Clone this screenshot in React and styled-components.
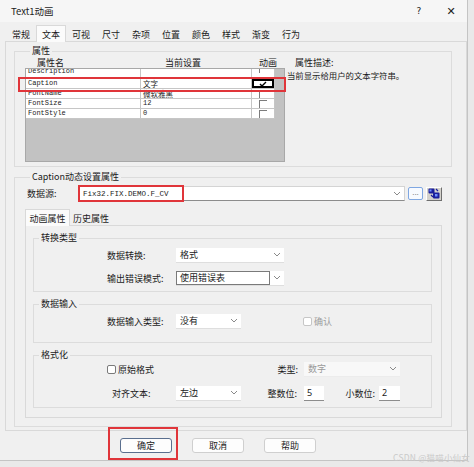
import React from "react";
import styled, { createGlobalStyle } from "styled-components";

const GlobalStyle = createGlobalStyle`
  html, body {
    margin: 0;
    padding: 0;
    background: #e9e9e9;
  }
  body {
    font-family: "Noto Sans CJK SC", "Noto Sans", sans-serif;
    font-size: 9px;
    color: #1b1b1b;
  }
  * {
    box-sizing: border-box;
  }
`;

const Page = styled.div`
  position: relative;
  width: 474px;
  height: 467px;
  overflow: hidden;
`;

const Window = styled.div`
  width: 468px;
  height: 461px;
  background: #f0f0f0;
  border-right: 1px solid #c4c4c4;
  border-bottom: 1px solid #c4c4c4;
  display: flex;
  flex-direction: column;
`;

const TitleBar = styled.div`
  height: 22px;
  flex: none;
  display: flex;
  align-items: center;
  padding-left: 11px;
  background: #f6f6f6;
  font-size: 9.5px;
`;

const TitleText = styled.span`
  flex: 1;
`;

const TitleButton = styled.span`
  width: 32px;
  text-align: center;
  font-family: "DejaVu Sans", sans-serif;
  font-size: ${(p) => p.$size || 10}px;
  color: #222;
`;

const TabStrip = styled.div`
  position: relative;
  z-index: 1;
  height: ${(p) => p.$h}px;
  flex: none;
  display: flex;
  align-items: flex-end;
  padding-left: ${(p) => p.$indent || 0}px;
`;

const Tab = styled.div`
  width: ${(p) => p.$w}px;
  height: ${(p) => (p.$active ? p.$h : p.$h - 2)}px;
  margin-bottom: ${(p) => (p.$active ? -1 : 0)}px;
  display: flex;
  align-items: center;
  justify-content: center;
  background: ${(p) => (p.$active ? "#fbfbfb" : "transparent")};
  border: 1px solid ${(p) => (p.$active ? "#d9d9d9" : "transparent")};
  border-bottom: none;
`;

const TabPanel = styled.div`
  margin-left: 5px;
  width: 462px;
  border: 1px solid #d9d9d9;
  padding: 4px 14px 3px 8px;
`;

const Group = styled.fieldset`
  margin: ${(p) => p.$mt || 0}px 0 0 0;
  padding: ${(p) => p.$pad};
  border: 1px solid #dcdcdc;
  min-width: 0;
`;

const Legend = styled.legend`
  padding: 0 2px;
  margin-left: 5px;
  font-size: 9px;
  line-height: 10px;
`;

/* property grid */

const PropArea = styled.div`
  display: flex;
`;

const GridColumn = styled.div`
  width: 260px;
  flex: none;
`;

const HeaderRow = styled.div`
  display: flex;
  height: 10px;
  line-height: 10px;
  font-size: 9px;
`;

const HeaderCell = styled.span`
  width: ${(p) => p.$w}px;
  padding-left: ${(p) => p.$pl}px;
  flex: none;
  white-space: nowrap;
`;

const GridBox = styled.div`
  position: relative;
  height: 94px;
  border: 1px solid #a8a8a8;
  background: #c2c2c2;
`;

const GridRow = styled.div`
  display: grid;
  grid-template-columns: 115px 111px 23px 9px;
  height: 10px;
  overflow: hidden;
`;

const GridCell = styled.div`
  background: #fff;
  border-right: 1px solid #c6c6c6;
  border-bottom: 1px solid #c6c6c6;
  padding-left: 2px;
  font-family: ${(p) =>
    p.$cjk
      ? '"Noto Sans CJK SC", sans-serif'
      : '"Liberation Mono", "DejaVu Sans Mono", monospace'};
  font-size: ${(p) => (p.$cjk ? 7.5 : 7)}px;
  line-height: ${(p) => (p.$clip ? 5 : 9)}px;
  white-space: nowrap;
  overflow: hidden;
`;

const CheckCell = styled.div`
  background: #fff;
  border-right: 1px solid #c6c6c6;
  border-bottom: 1px solid #c6c6c6;
  display: flex;
  align-items: ${(p) => (p.$clip ? "flex-start" : "center")};
  justify-content: center;
`;

const Gutter = styled.div`
  background: #c2c2c2;
`;

const ClassicCheck = styled.span`
  width: 8px;
  height: ${(p) => (p.$clip ? 4 : 8)}px;
  border-top: ${(p) => (p.$clip ? "none" : "1px solid #7c7c7c")};
  border-left: 1px solid #7c7c7c;
`;

const FocusBox = styled.span`
  width: 22px;
  height: 9px;
  border: 2px solid #000;
  display: flex;
  align-items: center;
  justify-content: center;
`;

const Highlight = styled.span`
  position: absolute;
  left: ${(p) => p.$x}px;
  top: ${(p) => p.$y}px;
  width: ${(p) => p.$w}px;
  height: ${(p) => p.$h}px;
  border: 2px solid #e0353a;
  pointer-events: none;
`;

const DescColumn = styled.div`
  flex: 1;
  padding-left: 2px;
`;

const DescTitle = styled.div`
  padding-left: 8px;
  font-size: 9px;
  line-height: 10px;
  height: 11px;
`;

const DescText = styled.div`
  font-size: 8.4px;
  line-height: 10px;
  margin-top: 1px;
  white-space: nowrap;
`;

/* data source row */

const SourceRow = styled.div`
  display: flex;
  align-items: center;
  height: 17px;
`;

const SourceLabel = styled.span`
  width: 53px;
  padding-left: 2px;
  flex: none;
`;

const Combo = styled.div`
  position: relative;
  width: 327px;
  height: 15px;
  display: flex;
  align-items: center;
  background: #fff;
  border: 1px solid #d4d4d4;
  border-bottom-color: #8c8c8c;
  padding-left: 4px;
  font-family: "Liberation Mono", monospace;
  font-size: 7.5px;
`;

const ComboText = styled.span`
  flex: 1;
`;

const BrowseButton = styled.span`
  width: 15px;
  height: 13px;
  margin-left: 3px;
  border: 1px solid #7fa7e2;
  border-radius: 2px;
  background: #f7faff;
  color: #8a8a8a;
  font-size: 8px;
  line-height: 8px;
  text-align: center;
`;

const IconButton = styled.span`
  width: 16px;
  height: 14px;
  margin-left: 3px;
  background: #d4d2cc;
  border: 1px solid;
  border-color: #fff #6e6e6e #6e6e6e #fff;
  display: flex;
  align-items: center;
  justify-content: center;
`;

/* inner tab page */

const InnerPanel = styled.div`
  border: 1px solid #d9d9d9;
  padding: 7px 9px 9px 7px;
`;

const FieldRow = styled.div`
  display: flex;
  align-items: center;
  height: 16px;
  margin-top: ${(p) => p.$mt || 0}px;
  padding-left: ${(p) => p.$indent ?? 73}px;
`;

const FieldLabel = styled.span`
  width: ${(p) => p.$w}px;
  flex: none;
  text-align: ${(p) => p.$align || "left"};
  margin-right: ${(p) => p.$gap || 0}px;
  margin-left: ${(p) => p.$ml || 0}px;
  white-space: nowrap;
`;

const Select = styled.div`
  width: ${(p) => p.$w}px;
  height: 15px;
  flex: none;
  display: flex;
  align-items: center;
  background: ${(p) => (p.$disabled ? "#f8f8f8" : "#fff")};
  color: ${(p) => (p.$disabled ? "#9a9a9a" : "#1b1b1b")};
  border-bottom: 1px solid ${(p) => (p.$disabled ? "#ececec" : "#dedede")};
`;

const SelectValue = styled.span`
  flex: 1;
  height: 100%;
  display: flex;
  align-items: center;
  padding-left: 3px;
  border: 1px solid ${(p) => (p.$framed ? "#7a7a7a" : "transparent")};
`;

const Chevron = styled.svg`
  width: 14px;
  height: 6px;
  flex: none;
`;

const NumberBox = styled.div`
  width: ${(p) => p.$w}px;
  height: 15px;
  flex: none;
  display: flex;
  align-items: center;
  padding-left: 3px;
  background: #fff;
  border-bottom: 1px solid #8c8c8c;
  font-family: "Noto Sans", sans-serif;
  font-size: 9px;
`;

const CheckLabel = styled.span`
  display: flex;
  align-items: center;
  width: ${(p) => p.$w || "auto"};
  margin-left: ${(p) => p.$ml || 0}px;
  color: ${(p) => (p.$disabled ? "#9c9c9c" : "#1b1b1b")};
  flex: none;
`;

const CheckBox = styled.span`
  width: 9px;
  height: 9px;
  margin-right: 2px;
  border: 1px solid ${(p) => (p.$disabled ? "#c6c6c6" : "#7a7a7a")};
  border-radius: 2px;
  background: #fff;
`;

/* bottom buttons */

const ButtonRow = styled.div`
  display: flex;
  gap: 20px;
  margin-top: 7px;
  padding-left: 120px;
`;

const ButtonWrap = styled.div`
  position: relative;
`;

const Button = styled.button`
  width: 52px;
  height: 15px;
  padding: 0;
  font-family: inherit;
  font-size: 9px;
  line-height: 12px;
  color: #1b1b1b;
  background: #fdfdfd;
  border: 1px solid ${(p) => (p.$primary ? "#5a6f8e" : "#cfcfcf")};
  border-radius: 3px;
`;

const Watermark = styled.span`
  position: absolute;
  right: 4px;
  bottom: 4px;
  font-size: 8.5px;
  color: #cacaca;
  letter-spacing: 0.2px;
`;

const tabs = ["常规", "文本", "可视", "尺寸", "杂项", "位置", "颜色", "样式", "渐变", "行为"];

const props = [
  { name: "Description", value: "", clip: true },
  { name: "Caption", value: "文字", cjk: true, focused: true },
  { name: "FontName", value: "微软雅黑", cjk: true },
  { name: "FontSize", value: "12" },
  { name: "FontStyle", value: "0" },
];

const Caret = () => (
  <Chevron viewBox="0 0 14 6">
    <path d="M4 1 L7 4 L10 1" fill="none" stroke="#8a8a8a" strokeWidth="1" />
  </Chevron>
);

const Tick = () => (
  <svg width="8" height="6" viewBox="0 0 8 6">
    <path d="M1 3 L3 5 L7 1" fill="none" stroke="#000" strokeWidth="1.4" />
  </svg>
);

const TagIcon = () => (
  <svg width="12" height="11" viewBox="0 0 12 11">
    <rect x="0.5" y="0.5" width="6" height="5" rx="1" fill="#1b1f9c" />
    <rect x="5" y="4.5" width="6.5" height="6" rx="1" fill="#1b1f9c" />
    <rect x="1.5" y="1.5" width="2" height="2" fill="#6f8fff" />
    <rect x="7" y="6" width="2.5" height="2.5" fill="#6f8fff" />
    <path d="M8 1 L10 3 M3 7 L5 9" stroke="#1b1f9c" strokeWidth="1.2" />
  </svg>
);

const PropertyGrid = () => (
  <GridBox>
    {props.map((p) => (
      <GridRow key={p.name}>
        <GridCell $clip={p.clip}>{p.name}</GridCell>
        <GridCell $cjk={p.cjk} $clip={p.clip}>
          {p.value}
        </GridCell>
        <CheckCell $clip={p.clip}>
          {p.focused ? (
            <FocusBox>
              <Tick />
            </FocusBox>
          ) : (
            <ClassicCheck $clip={p.clip} />
          )}
        </CheckCell>
        <Gutter />
      </GridRow>
    ))}
    <Highlight $x={-8} $y={8} $w={268} $h={15} />
  </GridBox>
);

export default function App() {
  return (
    <Page>
      <GlobalStyle />
      <Window>
        <TitleBar>
          <TitleText>Text1动画</TitleText>
          <TitleButton $size={9}>?</TitleButton>
          <TitleButton $size={11}>✕</TitleButton>
        </TitleBar>

        <TabStrip $h={19} $indent={6}>
          {tabs.map((t) => (
            <Tab key={t} $w={30} $h={17} $active={t === "文本"}>
              {t}
            </Tab>
          ))}
        </TabStrip>

        <TabPanel>
          <Group $pad="2px 0 4px 10px">
            <Legend>属性</Legend>
            <PropArea>
              <GridColumn>
                <HeaderRow>
                  <HeaderCell $w={116} $pl={12}>属性名</HeaderCell>
                  <HeaderCell $w={111} $pl={24}>当前设置</HeaderCell>
                  <HeaderCell $w={23} $pl={7}>动画</HeaderCell>
                </HeaderRow>
                <PropertyGrid />
              </GridColumn>
              <DescColumn>
                <DescTitle>属性描述:</DescTitle>
                <DescText>当前显示给用户的文本字符串。</DescText>
              </DescColumn>
            </PropArea>
          </Group>

          <Group $mt={5} $pad="3px 9px 8px 10px">
            <Legend>Caption动态设置属性</Legend>
            <SourceRow>
              <SourceLabel>数据源:</SourceLabel>
              <Combo>
                <ComboText>Fix32.FIX.DEMO.F_CV</ComboText>
                <Caret />
                <Highlight $x={-1} $y={-2} $w={106} $h={17} />
              </Combo>
              <BrowseButton>...</BrowseButton>
              <IconButton>
                <TagIcon />
              </IconButton>
            </SourceRow>

            <TabStrip $h={23}>
              <Tab $w={45} $h={17} $active>
                动画属性
              </Tab>
              <Tab $w={42} $h={17}>
                历史属性
              </Tab>
            </TabStrip>

            <InnerPanel>
              <Group $pad="4px 0 5px 0">
                <Legend>转换类型</Legend>
                <FieldRow>
                  <FieldLabel $w={69}>数据转换:</FieldLabel>
                  <Select $w={108}>
                    <SelectValue>格式</SelectValue>
                    <Caret />
                  </Select>
                </FieldRow>
                <FieldRow $mt={7}>
                  <FieldLabel $w={69}>输出错误模式:</FieldLabel>
                  <Select $w={108}>
                    <SelectValue $framed>使用错误表</SelectValue>
                    <Caret />
                  </Select>
                </FieldRow>
              </Group>

              <Group $mt={7} $pad="4px 0 13px 0">
                <Legend>数据输入</Legend>
                <FieldRow>
                  <FieldLabel $w={69}>数据输入类型:</FieldLabel>
                  <Select $w={65}>
                    <SelectValue>没有</SelectValue>
                    <Caret />
                  </Select>
                  <CheckLabel $ml={62} $disabled>
                    <CheckBox $disabled />
                    确认
                  </CheckLabel>
                </FieldRow>
              </Group>

              <Group $mt={7} $pad="1px 0 6px 0">
                <Legend>格式化</Legend>
                <FieldRow>
                  <CheckLabel $w="168px">
                    <CheckBox />
                    原始格式
                  </CheckLabel>
                  <FieldLabel $w={23} $align="right" $gap={6}>
                    类型:
                  </FieldLabel>
                  <Select $w={96} $disabled>
                    <SelectValue>数字</SelectValue>
                    <Caret />
                  </Select>
                </FieldRow>
                <FieldRow $mt={8} $indent={78}>
                  <FieldLabel $w={64}>对齐文本:</FieldLabel>
                  <Select $w={65}>
                    <SelectValue>左边</SelectValue>
                    <Caret />
                  </Select>
                  <FieldLabel $w={56} $align="right" $gap={7}>
                    整数位:
                  </FieldLabel>
                  <NumberBox $w={20}>5</NumberBox>
                  <FieldLabel $w={51} $align="right" $gap={4}>
                    小数位:
                  </FieldLabel>
                  <NumberBox $w={21}>2</NumberBox>
                </FieldRow>
              </Group>
            </InnerPanel>
          </Group>
        </TabPanel>

        <ButtonRow>
          <ButtonWrap>
            <Button $primary>确定</Button>
            <Highlight $x={-12} $y={-11} $w={70} $h={33} />
          </ButtonWrap>
          <Button>取消</Button>
          <Button>帮助</Button>
        </ButtonRow>
      </Window>
      <Watermark>CSDN @猫喵小仙女</Watermark>
    </Page>
  );
}
